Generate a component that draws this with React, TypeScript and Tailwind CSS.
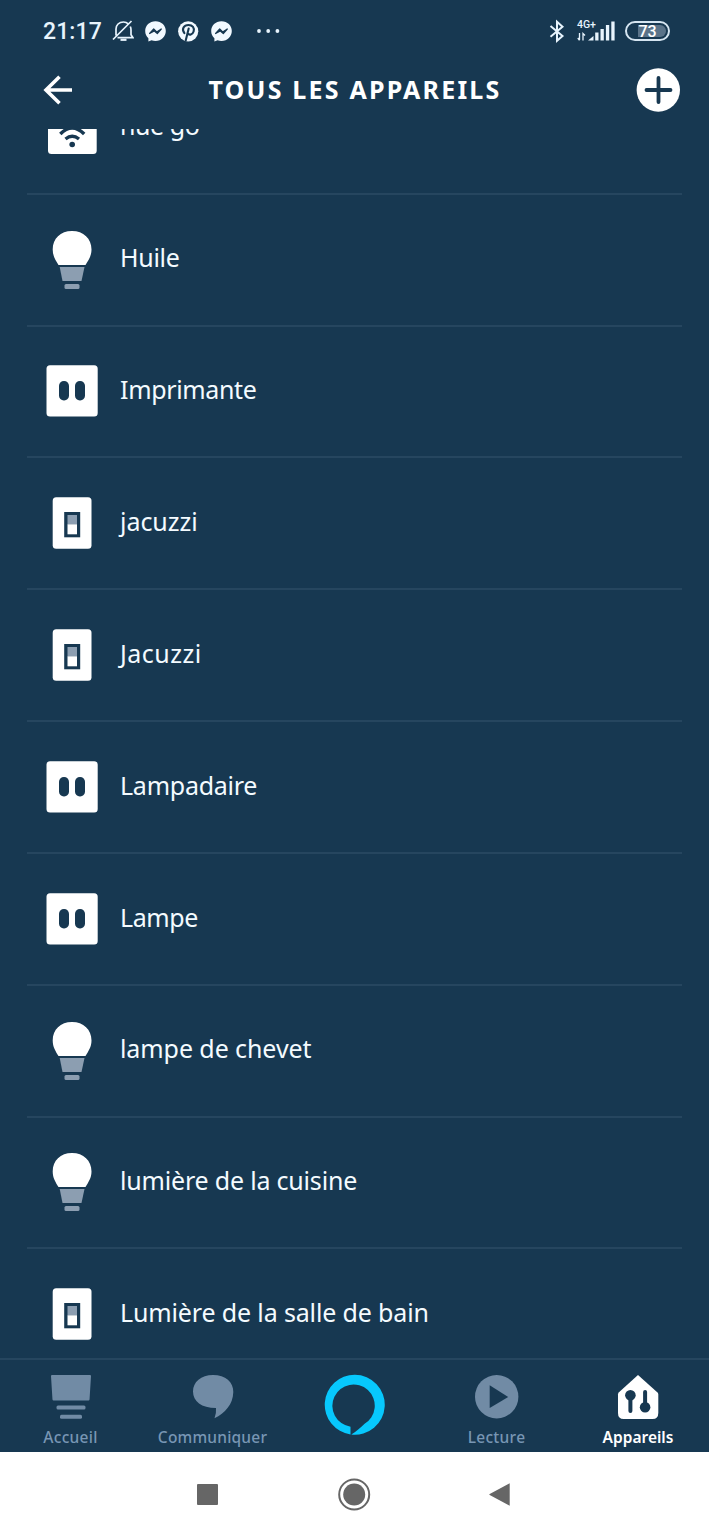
import React from 'react';

type Kind = 'hub' | 'bulb' | 'plug' | 'switch';

const devices: { name: string; kind: Kind; tracking: string }[] = [
  { name: 'hue go', kind: 'hub', tracking: 'tracking-[-0.450px]' },
  { name: 'Huile', kind: 'bulb', tracking: 'tracking-[-0.300px]' },
  { name: 'Imprimante', kind: 'plug', tracking: 'tracking-[-0.350px]' },
  { name: 'jacuzzi', kind: 'switch', tracking: 'tracking-[-0.050px]' },
  { name: 'Jacuzzi', kind: 'switch', tracking: 'tracking-[0.500px]' },
  { name: 'Lampadaire', kind: 'plug', tracking: 'tracking-[-0.250px]' },
  { name: 'Lampe', kind: 'plug', tracking: 'tracking-[-0.400px]' },
  { name: 'lampe de chevet', kind: 'bulb', tracking: 'tracking-[-0.080px]' },
  { name: 'lumière de la cuisine', kind: 'bulb', tracking: 'tracking-[-0.190px]' },
  { name: 'Lumière de la salle de bain', kind: 'switch', tracking: 'tracking-[-0.140px]' },
];

function DeviceIcon({ kind }: { kind: Kind }) {
  if (kind === 'bulb') {
    return (
      <svg width="52" height="58" viewBox="0 0 52 58">
        <path d="M26 0C14.500 0 6.700 7.500 6.700 18.500C6.700 25 9.500 29 12.500 34H39.500C42.500 29 45.500 25 45.500 18.500C45.500 7.500 37.500 0 26 0Z" fill="#fff" />
        <path d="M13.700 36H38.500L35.500 50H16.500Z" fill="#8c9eb1" />
        <rect x="18.500" y="53" width="15" height="5" rx="1.500" fill="#8c9eb1" />
      </svg>
    );
  }
  if (kind === 'plug') {
    return (
      <svg width="52" height="52" viewBox="0 0 52 52">
        <rect x="0.500" y="0.300" width="51.200" height="51.200" rx="3.500" fill="#fff" />
        <rect x="13" y="16" width="10" height="19.500" rx="4.800" fill="#173851" />
        <rect x="29" y="16" width="10" height="19.500" rx="4.800" fill="#173851" />
      </svg>
    );
  }
  if (kind === 'switch') {
    return (
      <svg width="52" height="52" viewBox="0 0 52 52">
        <rect x="6.700" y="0.300" width="38.800" height="51.400" rx="3.500" fill="#fff" />
        <rect x="18.200" y="15" width="16" height="25.300" fill="#173851" />
        <rect x="21.500" y="18" width="9.500" height="9.500" fill="#8c9eb1" />
        <rect x="21.500" y="27.300" width="9.500" height="10" fill="#fff" />
      </svg>
    );
  }
  return (
    <svg width="52" height="52" viewBox="0 0 52 52">
      <rect x="2" y="0" width="48.700" height="52" rx="3.500" fill="#fff" />
      <circle cx="26.200" cy="42.500" r="2.800" fill="#173851" />
      <path d="M19.500 37Q26.200 31.500 33 37M14.300 32Q26.200 20 38.200 32" fill="none" stroke="#173851" strokeWidth="3.400" />
    </svg>
  );
}

function Messenger() {
  return (
    <svg width="21" height="21" viewBox="0 0 21 21">
      <path d="M10.500 0.200C4.500 0.200 0.200 4.500 0.200 10C0.200 13 1.400 15.500 3.400 17.200V20.500L6.500 19.200C7.800 19.700 9 19.900 10.500 19.900C16.500 19.900 20.800 15.500 20.800 10C20.800 4.500 16.500 0.200 10.500 0.200Z" fill="#f2f9ff" />
      <path d="M4.600 12.500L8.700 8L11.700 11L16.300 8L12.300 12.500L9.300 10Z" fill="#173851" stroke="#173851" strokeWidth="1.200" strokeLinejoin="round" />
    </svg>
  );
}

function StatusBar() {
  return (
    <header className="flex h-[62px] shrink-0 items-center pl-[43px] pr-[39px] text-[#e8f4fd]">
      <span className="w-[69px] whitespace-nowrap pt-px font-['Roboto'] text-[23px] font-medium leading-none tracking-[0.100px]">21:17</span>
      <div className="flex items-center gap-[12px]">
        <svg width="22" height="22" viewBox="0 0 22 22" fill="none" stroke="#e8f4fd" strokeWidth="1.700">
          <path d="M1 19.500L19.500 1M4 15.500V9C4 5 7 2 11.500 2C13.500 2 15 2.600 16.200 3.800M18.300 6.500C18.800 7.600 19 8.500 19 10V14.800L21 17.700H5.500" />
          <path d="M8.500 19.800H14.500" strokeWidth="2.200" />
        </svg>
        <div className="-ml-[1px]"><Messenger /></div>
        <svg width="21" height="21" viewBox="0.300 0 21 21">
          <circle cx="10.500" cy="10.300" r="10.100" fill="#f2f9ff" />
          <path d="M6.700 12.200C3.500 8 6.200 4 10.800 4C14.900 4 17 7 15.900 10.500C14.900 13.800 11.500 14.500 10 12.400M11 7.500L8 19.500" fill="none" stroke="#173851" strokeWidth="2.100" strokeLinecap="round" />
        </svg>
        <div className="-ml-[0.500px]"><Messenger /></div>
      </div>
      <svg className="ml-[24px]" width="26" height="4" viewBox="0 0 26 4" fill="#e8f4fd">
        <circle cx="3" cy="2" r="1.900" /><circle cx="12.200" cy="2" r="1.900" /><circle cx="21.400" cy="2" r="1.900" />
      </svg>
      <div className="ml-auto flex items-center">
        <svg width="16" height="24" viewBox="0 0 16 24" fill="none" stroke="#e8f4fd" strokeWidth="2">
          <path d="M1.500 7L13.500 17L8 21.800V2.800L13.500 7.800L1.500 17.800" />
        </svg>
        <div className="ml-[12px] flex h-[24px] w-[39px] flex-col">
          <span className="h-[10px] font-['Roboto'] text-[10.500px] font-medium leading-[12px]">4G+</span>
          <svg width="39" height="22" viewBox="0 0 39 22" className="-mt-[9px] shrink-0" fill="#e8f4fd">
            <path d="M2.500 13V20M0.800 18L2.500 20.300M6 20.500V13.500L8 15.500" fill="none" stroke="#e8f4fd" strokeWidth="1.300" />
            <path d="M11 20.500L16.500 16V20.500Z" />
            <rect x="18.200" y="12.500" width="3.300" height="8" /><rect x="23.500" y="9" width="3.300" height="11.500" />
            <rect x="28.900" y="5" width="3.300" height="15.500" /><rect x="34.300" y="1.500" width="3.300" height="19" />
          </svg>
        </div>
        <div className="ml-[9px] flex h-[20px] w-[45px] items-center rounded-full border-2 border-[#d5e5f1] p-[2px]">
          <div className="flex h-full w-full items-center justify-center rounded-full bg-[linear-gradient(90deg,#173851_25%,#5a7389_25%)] pt-px font-['Roboto'] text-[16px] font-medium leading-none text-white">73</div>
        </div>
      </div>
    </header>
  );
}

function TabBar() {
  return (
    <nav className="flex h-[94px] shrink-0 border-t-2 border-[#26465f] font-['Noto_Sans'] text-[15.500px] font-medium leading-[20px] text-[#7896b4]">
      <div className="flex w-[141px] flex-col items-center pt-[14px]">
        <svg width="42" height="46" viewBox="0 -0.500 42 46" fill="#718ba5">
          <path d="M1 1.500Q1 0.500 2 0.500H40Q41 0.500 41 1.500L39.500 25Q39.400 26 38.500 26H3.500Q2.600 26 2.500 25Z" />
          <rect x="6.500" y="31" width="29" height="4" rx="1.500" /><rect x="10" y="40.200" width="22" height="4" rx="1.500" />
        </svg>
        <span className="mt-[7px] tracking-[0.300px]">Accueil</span>
      </div>
      <div className="flex w-[143px] flex-col items-center pt-[14px]">
        <svg width="42" height="46" viewBox="0 -0.500 42 46" fill="#718ba5">
          <path d="M21 0.500C9 0.500 1 7.500 1 17C1 27 9.500 33.500 24 33.500Q24.500 38 22.500 43.800C33 38.500 41 30 41.300 17.500C41.500 7.500 33.500 0.500 21 0.500Z" />
        </svg>
        <span className="mt-[7px] tracking-[0.200px]">Communiquer</span>
      </div>
      <div className="flex w-[142px] flex-col items-center pt-[14px]">
        <svg width="62" height="62" viewBox="0.200 -0.200 62 62">
          <path fillRule="evenodd" d="M31 0.500A30 30 0 0 0 26.700 60.200V52.500A21.200 21.200 0 1 1 40.500 49.800C37 53.500 32 57.500 27.500 60.300A30 30 0 1 0 31 0.500Z" fill="#07c8fd" />
        </svg>
      </div>
      <div className="flex w-[141px] flex-col items-center pt-[14px]">
        <svg width="44" height="46" viewBox="0.300 -0.500 44 46">
          <circle cx="22" cy="22.200" r="21.700" fill="#718ba5" />
          <path d="M15 10.800L33.500 22.500L15 33.500Z" fill="#173851" />
        </svg>
        <span className="mt-[7px] tracking-[0.300px]">Lecture</span>
      </div>
      <div className="flex w-[142px] flex-col items-center pt-[14px]">
        <svg width="42" height="46" viewBox="0 -0.500 42 46">
          <path d="M21 0.500L40.500 18Q41.300 18.800 41.300 20V38.500Q41.300 44.500 35.500 44.500H6.700Q1 44.500 1 38.500V20Q1 18.800 1.700 18Z" fill="#fff" />
          <g fill="#173851">
            <circle cx="13.400" cy="20.700" r="5.300" /><circle cx="28.100" cy="32.800" r="5.300" />
            <path d="M13.400 20V36.500M28.100 17.500V33" stroke="#173851" strokeWidth="4" strokeLinecap="round" />
          </g>
        </svg>
        <span className="mt-[7px] font-semibold text-white">Appareils</span>
      </div>
    </nav>
  );
}

export default function App() {
  return (
    <div className="flex h-[1537px] w-[709px] flex-col overflow-hidden bg-[#173851] font-['Noto_Sans',sans-serif]">
      <StatusBar />
      <div className="flex h-[67px] shrink-0 items-start justify-between pl-[43px] pr-[29px] pt-[6px]">
        <svg className="mt-[7px]" width="30" height="30" viewBox="0 0 30 30" fill="none" stroke="#fff" strokeWidth="3.600">
          <path d="M2.500 15H29M16.500 1.800L3 15L16.500 28.200" />
        </svg>
        <h1 className="-mt-px ml-px whitespace-nowrap text-[25px] font-bold leading-[44px] tracking-[2.200px] text-white">TOUS LES APPAREILS</h1>
        <svg width="44" height="44" viewBox="0 0 44 44">
          <circle cx="22.300" cy="22" r="21.700" fill="#fff" />
          <path d="M10.500 22H34.500M22.500 10V34" stroke="#173851" strokeWidth="3.800" strokeLinecap="round" />
        </svg>
      </div>
      <main className="h-[1229px] shrink-0 overflow-hidden">
        <ul className="-mt-[66.200px] pl-[27px] pr-[27px]">
          {devices.map((d) => (
            <li key={d.name} className="flex h-[131.850px] items-center border-b-2 border-[#26465f] pl-[19px]">
              <DeviceIcon kind={d.kind} />
              <span className={`ml-[22px] -mt-[3px] whitespace-nowrap text-[25px] text-[#f4fbff] ${d.tracking}`}>{d.name}</span>
            </li>
          ))}
        </ul>
      </main>
      <TabBar />
      <footer className="flex h-[85px] shrink-0 items-center bg-white pb-px pl-[196px]">
        <svg width="22" height="34" viewBox="0 -0.500 22 34"><rect x="1" y="6.500" width="21" height="21" rx="1" fill="#666" /></svg>
        <svg className="ml-[119px]" width="34" height="34" viewBox="0 -0.500 34 34">
          <circle cx="17.200" cy="17" r="15" fill="none" stroke="#666" strokeWidth="2" />
          <circle cx="17.200" cy="17" r="11" fill="#666" />
        </svg>
        <svg className="ml-[117px]" width="22" height="34" viewBox="-0.700 -0.500 22 34"><path d="M21 5.800V28.200L1 17.500Q0 17 1 16.500Z" fill="#666" /></svg>
      </footer>
    </div>
  );
}
